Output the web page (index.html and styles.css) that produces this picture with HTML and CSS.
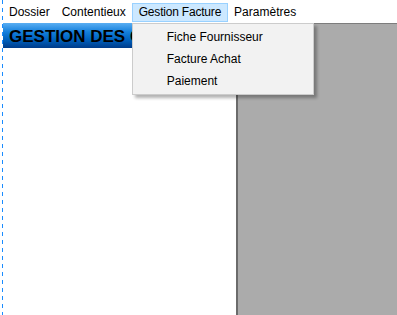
FILE: index.html
```html
<!DOCTYPE html>
<html lang="fr">
<head>
  <meta charset="UTF-8">
  <meta name="viewport" content="width=device-width, initial-scale=1.0">
  <title>Gestion des contentieux</title>
  <link rel="stylesheet" href="styles.css">
</head>
<body>
  <div class="menu-bar">
    <span class="menu-item">Dossier</span>
    <span class="menu-item">Contentieux</span>
    <span class="menu-item open">Gestion Facture
      <div class="dropdown">
        <div class="dropdown-item">Fiche Fournisseur</div>
        <div class="dropdown-item">Facture Achat</div>
        <div class="dropdown-item">Paiement</div>
      </div>
    </span>
    <span class="menu-item">Paramètres</span>
  </div>

  <div class="main">
    <div class="left-panel">
      <div class="title-bar">GESTION DES CONTENTIEUX</div>
    </div>
    <div class="workspace"></div>
  </div>
</body>
</html>
```

FILE: styles.css
```css
html, body {
  height: 100%;
}

body {
  margin: 0;
  font-family: "Liberation Sans", Arial, sans-serif;
  font-size: 12px;
  color: #000;
  background-color: #ffffff;
  background-image: repeating-linear-gradient(to bottom, #1a8cff 0, #1a8cff 4px, transparent 4px, transparent 8px);
  background-size: 1px 100%;
  background-position: 2px 0;
  background-repeat: no-repeat;
  display: flex;
  flex-direction: column;
  overflow: hidden;
}

.menu-bar {
  height: 23px;
  display: flex;
  align-items: flex-start;
  padding-left: 3px;
  flex-shrink: 0;
}

.menu-item {
  position: relative;
  margin-top: 3px;
  height: 17px;
  line-height: 17px;
  padding: 0 5px;
  border: 1px solid transparent;
  white-space: nowrap;
}

.menu-item.open {
  padding: 0 6px;
  letter-spacing: -0.2px;
  background: #cce8ff;
  border-color: #99d1ff;
}

.dropdown {
  position: absolute;
  top: 19px;
  left: -1px;
  width: 180px;
  padding: 2px 0;
  letter-spacing: 0;
  background: #f2f2f2;
  border: 1px solid #cccccc;
  box-shadow: 3px 3px 3px rgba(0, 0, 0, 0.3);
  z-index: 10;
}

.dropdown-item {
  height: 22px;
  line-height: 22px;
  padding-left: 34px;
}

.main {
  flex: 1;
  display: flex;
}

.left-panel {
  width: 233px;
  padding-left: 3px;
}

.title-bar {
  height: 25px;
  line-height: 27px;
  padding-left: 6px;
  font-family: "Liberation Sans", Arial, sans-serif;
  font-weight: bold;
  font-size: 17px;
  white-space: nowrap;
  overflow: hidden;
  background: linear-gradient(to bottom, #5aaef2 0%, #1580dc 35%, #0063c0 65%, #003c8a 100%);
}

.workspace {
  flex: 1;
  background: #ababab;
  border-left: 2px solid #6b6b6b;
  border-top: 1px solid #7d7d7d;
}
```
